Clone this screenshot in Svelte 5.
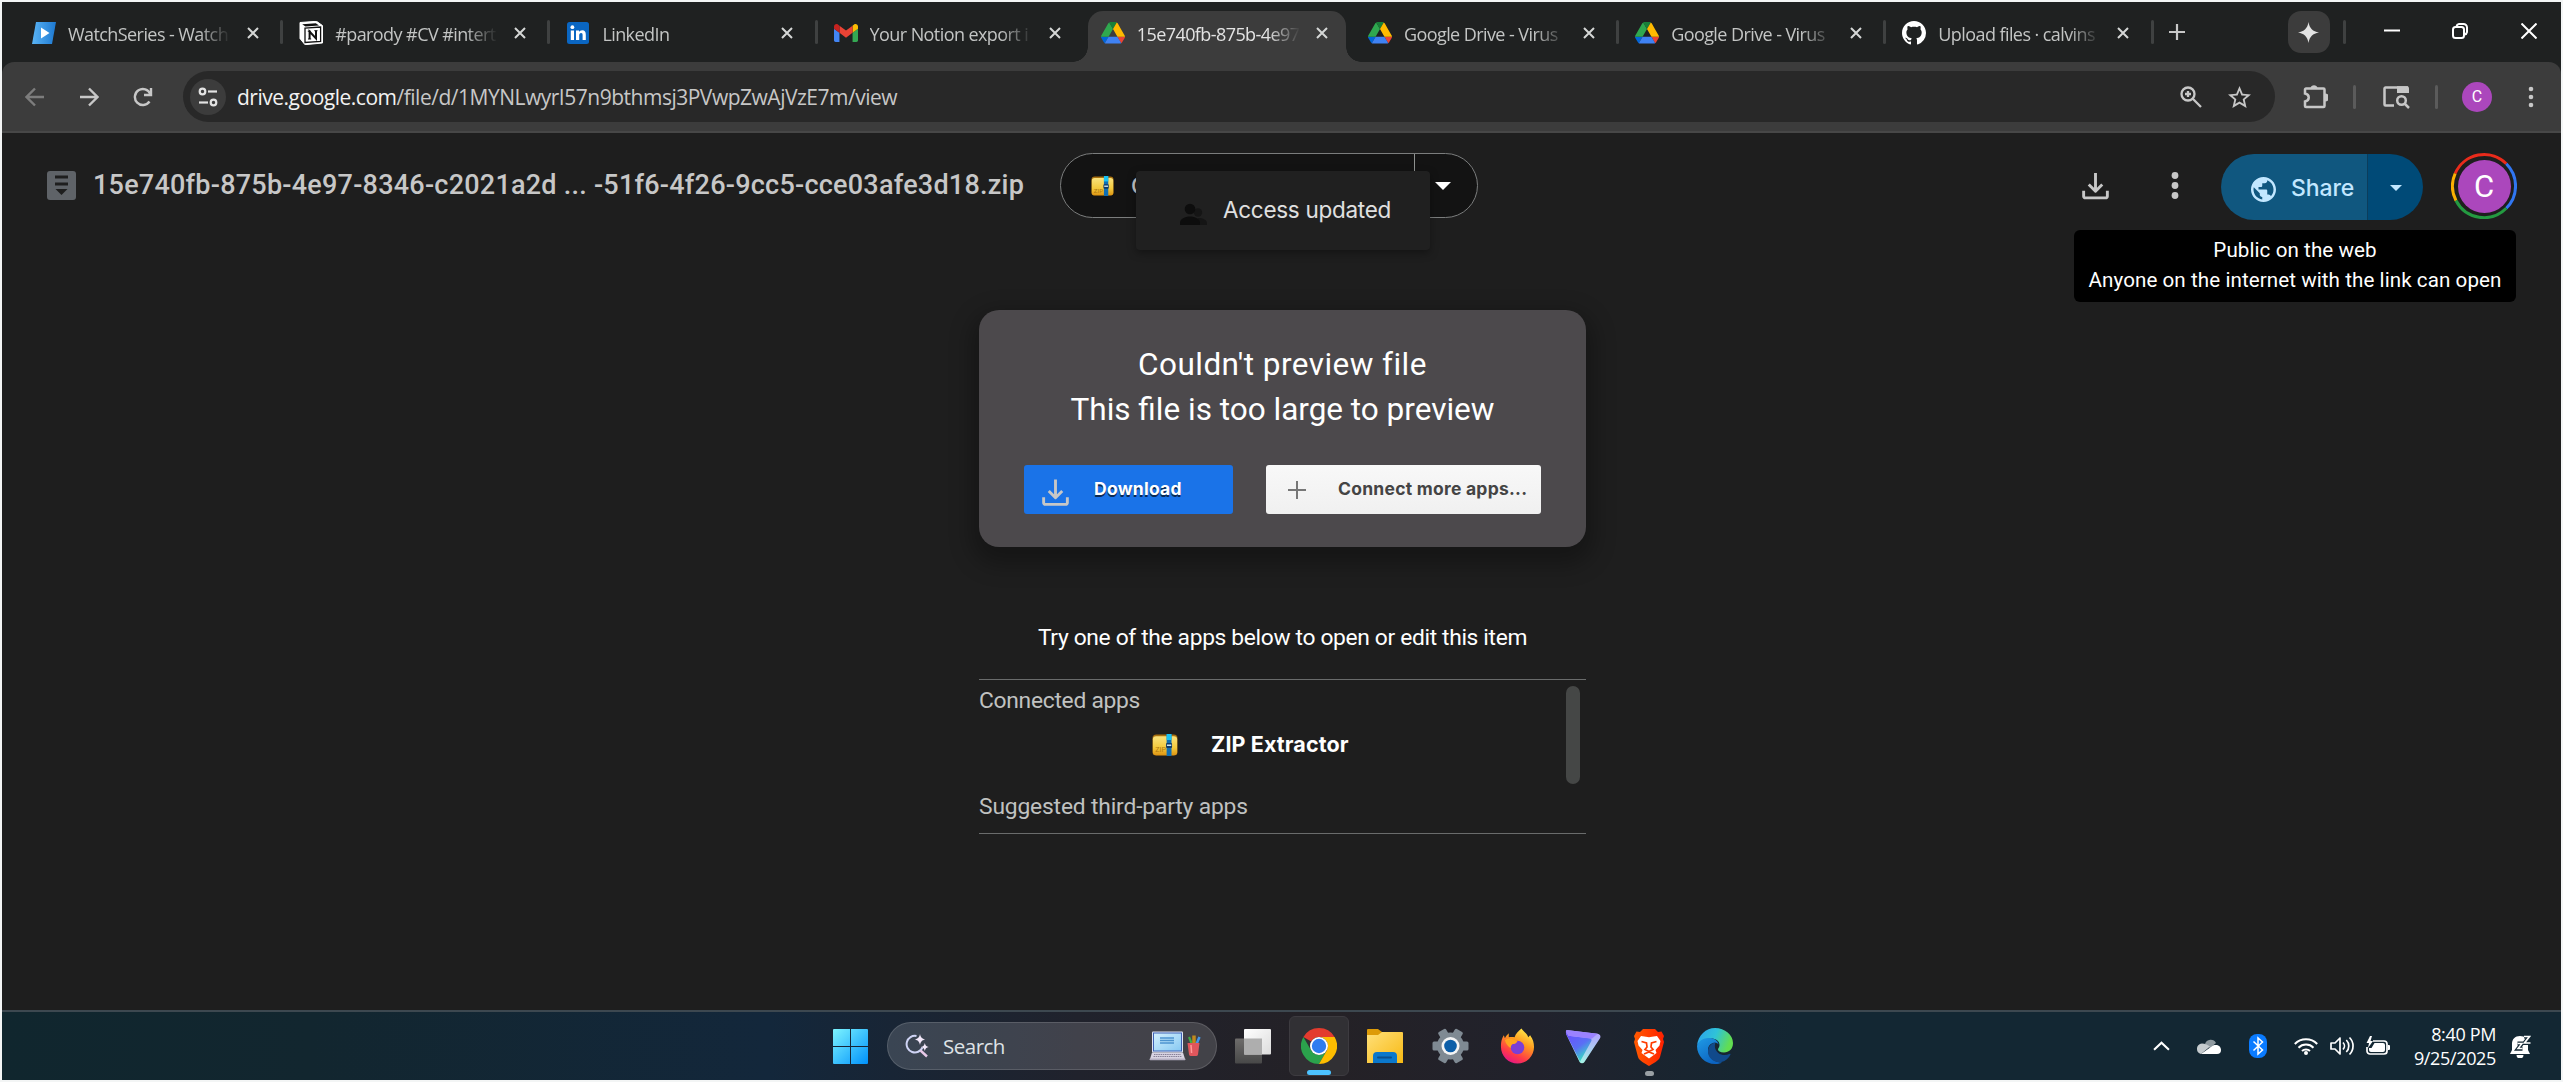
<script>
  const tabs = [
    { icon: 'watch', title: 'WatchSeries - Watch' },
    { icon: 'notion', title: '#parody #CV #intert' },
    { icon: 'linkedin', title: 'LinkedIn' },
    { icon: 'gmail', title: 'Your Notion export i' },
    { icon: 'drive', title: '15e740fb-875b-4e97', active: true },
    { icon: 'drive', title: 'Google Drive - Virus' },
    { icon: 'drive', title: 'Google Drive - Virus' },
    { icon: 'github', title: 'Upload files · calvins' }
  ];
</script>

{#snippet favicon(kind)}
  {#if kind === 'watch'}
    <svg class="fav" viewBox="0 0 24 24">
      <defs><linearGradient id="ws" x1="0" y1="0" x2="1" y2="0"><stop offset="0" stop-color="#5ab4f5" /><stop offset="1" stop-color="#1d78d0" /></linearGradient></defs>
      <path d="M4 1h20l-4 22H0z" fill="url(#ws)" /><path d="M9 6.5v11l8.5-5.5z" fill="#fff" />
    </svg>
  {:else if kind === 'notion'}
    <svg class="fav" viewBox="0 0 24 24">
      <path d="M1 1.5 17.5.3 23.5 4.6V22L6 23.7 1 17.5z" fill="#fff" stroke="#fff" stroke-linejoin="round" />
      <path d="M3.2 3.2 16.8 2.2l3.2 2.2L6.5 5.4z" fill="#111" /><path d="M6 7.1 21.6 6v14.4L6 21.5z" fill="#fff" stroke="#111" stroke-width="1.3" />
      <path d="M10.6 18v-7.500l6.400 7v-7.800" fill="none" stroke="#111" stroke-width="2" />
      <path d="M8.800 10.200h3M15.300 9.700h3.200M9 18h3.200" stroke="#111" stroke-width="1" />
    </svg>
  {:else if kind === 'linkedin'}
    <svg class="fav" viewBox="0 0 24 24">
      <rect x="1" y="1" width="22" height="22" rx="2.5" fill="#0a66c2" /><circle cx="6.4" cy="6.2" r="1.9" fill="#fff" />
      <path d="M4.800 9.600h3.200V19H4.800zM10 9.600h3V11c.6-1 1.700-1.700 3.200-1.700 2.700 0 3.600 1.700 3.600 4.400V19h-3.200v-4.800c0-1.300-.3-2.200-1.500-2.200-1.300 0-1.900 1-1.900 2.300V19H10z" fill="#fff" />
    </svg>
  {:else if kind === 'gmail'}
    <svg class="fav" viewBox="52 31 88 88">
      <path d="M58 108h14V74L52 59v43c0 3.320 2.690 6 6 6" fill="#4285f4" /><path d="M120 108h14c3.320 0 6-2.690 6-6V59l-20 15" fill="#34a853" />
      <path d="M120 48v26l20-15v-8c0-7.420-8.470-11.650-14.400-7.200" fill="#fbbc04" /><path d="M72 74V48l24 18 24-18v26L96 92" fill="#ea4335" />
      <path d="M52 51v8l20 15V48l-5.600-4.200c-5.940-4.450-14.400-.22-14.400 7.200" fill="#c5221f" />
    </svg>
  {:else if kind === 'drive'}
    <svg class="fav" viewBox="0 -4 87.300 87.300">
      <path d="m6.600 66.850 3.850 6.650c.8 1.400 1.950 2.500 3.300 3.300l13.750-23.800h-27.500c0 1.550.4 3.100 1.200 4.500z" fill="#0066da" />
      <path d="m43.650 25-13.750-23.800c-1.350.8-2.500 1.900-3.300 3.300l-25.400 44a9.060 9.060 0 0 0 -1.200 4.500h27.500z" fill="#2fa84f" />
      <path d="m73.550 76.800c1.350-.8 2.500-1.900 3.300-3.300l1.600-2.750 7.650-13.250c.8-1.400 1.200-2.950 1.200-4.500h-27.502l5.852 11.500z" fill="#ea4335" />
      <path d="m43.650 25 13.750-23.800c-1.350-.8-2.900-1.200-4.500-1.200h-18.500c-1.600 0-3.150.45-4.500 1.200z" fill="#188038" />
      <path d="m59.800 53h-32.300l-13.750 23.800c1.350.8 2.900 1.200 4.500 1.200h50.800c1.600 0 3.150-.45 4.500-1.200z" fill="#3f82f3" />
      <path d="m73.400 26.500-12.700-22c-.8-1.400-1.950-2.500-3.300-3.300l-13.750 23.800 16.150 28h27.450c0-1.550-.4-3.100-1.200-4.500z" fill="#ffba00" />
    </svg>
  {:else}
    <svg class="fav" viewBox="0 0 16 16">
      <path fill="#fff" d="M8 0C3.580 0 0 3.580 0 8c0 3.540 2.290 6.530 5.470 7.590.4.070.55-.17.55-.38 0-.19-.01-.82-.01-1.490-2.010.37-2.530-.49-2.690-.94-.09-.23-.48-.94-.82-1.130-.28-.15-.68-.52-.01-.53.63-.01 1.080.58 1.230.82.72 1.210 1.870.87 2.330.66.070-.52.28-.87.51-1.070-1.780-.2-3.640-.89-3.640-3.950 0-.87.31-1.590.82-2.150-.08-.2-.36-1.020.08-2.120 0 0 .67-.21 2.200.82.64-.18 1.320-.27 2-.27.68 0 1.360.09 2 .27 1.530-1.040 2.200-.82 2.200-.82.44 1.100.16 1.920.08 2.120.51.56.82 1.270.82 2.150 0 3.070-1.870 3.750-3.650 3.950.29.25.54.73.54 1.480 0 1.070-.01 1.930-.01 2.200 0 .21.15.46.55.38A8.013 8.013 0 0016 8c0-4.420-3.580-8-8-8z" />
    </svg>
  {/if}
{/snippet}

{#snippet zip(cls)}
  <svg class={cls} viewBox="0 0 24 22" preserveAspectRatio="none">
    <defs><linearGradient id="zg" x1="0" y1="0" x2="0" y2="1"><stop offset="0" stop-color="#f9e27c" /><stop offset=".6" stop-color="#f3c93c" /><stop offset="1" stop-color="#dd9412" /></linearGradient></defs>
    <rect x=".5" y=".5" width="23" height="21" rx="3.500" fill="#a8700f" /><rect x=".8" y="2.300" width="22.400" height="19" rx="3" fill="url(#zg)" />
    <rect x="13.500" width="4.500" height="22" fill="#0f6fb5" /><rect x="13.500" width="4.500" height="6" fill="#19c3f3" /><rect x="13" y="9" width="5.500" height="5" rx="1" fill="#123a66" /><rect x="13.800" y="10.500" width="4" height="1.500" fill="#c8e6f5" />
    <text x="3" y="18.500" font-size="6.500" font-family="Roboto, sans-serif" fill="#b07a10">ZIP</text>
  </svg>
{/snippet}

{#snippet tray(cls)}
  <svg class={cls} viewBox="0 0 28 28" fill="none" stroke="currentColor" stroke-width="3" stroke-linecap="butt" stroke-linejoin="round">
    <path d="M14 .5v19M7 12.500l7 7 7-7" /><path d="M1.700 19v5.500a1.800 1.800 0 0 0 1.800 1.800h21a1.800 1.800 0 0 0 1.800-1.800V19" />
  </svg>
{/snippet}

<div class="screen">
  <header class="tabstrip">
    {#each tabs as t, i}
      <div class="tab" class:active={t.active} class:sep={i !== 3 && i !== 4}>
        {@render favicon(t.icon)}
        <span class="tab-title">{t.title}</span>
        <svg class="close" viewBox="0 0 12 12"><path d="M1 1l10 10M11 1L1 11" /></svg>
      </div>
    {/each}
    <svg class="newtab" viewBox="0 0 16 16"><path d="M8 0v16M0 8h16" /></svg>
    <div class="spark"><svg viewBox="0 0 20 20"><path d="M10 0c1 6 4 9 10 10-6 1-9 4-10 10-1-6-4-9-10-10 6-1 9-4 10-10z" fill="#e3e3e3" /></svg></div>
    <i class="vline strip"></i>
    <svg class="win min" viewBox="0 0 16 16"><path d="M0 7.500h16" /></svg>
    <svg class="win rest" viewBox="0 0 16 16"><rect x="1" y="4" width="11" height="11" rx="2.500" /><path d="M4.500 3.500A3 3 0 0 1 7 1h4.500A3.500 3.500 0 0 1 15 4.500V9a3 3 0 0 1-2.500 2.500" /></svg>
    <svg class="win x" viewBox="0 0 16 16"><path d="M.5.5l15 15M15.500.5l-15 15" /></svg>
  </header>

  <div class="toolbar">
    <svg class="nav dim" viewBox="0 0 20 20"><path d="M19 10H2M10 1.500L1.500 10l8.500 8.500" /></svg>
    <svg class="nav" viewBox="0 0 20 20"><path d="M1 10h17M10 1.500l8.500 8.500-8.500 8.500" /></svg>
    <svg class="nav" viewBox="0 0 20 20"><path d="M16.500 14.500A8 8 0 1 1 17.300 7" /><path d="M18 1v7h-7" /></svg>
    <div class="omni">
      <span class="site"><svg viewBox="0 0 20 20"><circle cx="4.500" cy="4.500" r="2.800" /><path d="M10 4.500h9" /><circle cx="15.500" cy="15.500" r="2.800" /><path d="M1 15.500h9" /></svg></span>
      <span class="url"><span class="host">drive.google.com</span>/file/d/1MYNLwyrI57n9bthmsj3PVwpZwAjVzE7m/view</span>
      <svg class="oicon zoomi" viewBox="0 0 22 22"><circle cx="8" cy="8" r="6.500" /><path d="M12.800 12.800L21 21M8 5v6M5 8h6" /></svg>
      <svg class="oicon star" viewBox="2 2 20 19"><path d="M22 9.240l-7.190-.62L12 2 9.190 8.630 2 9.240l5.460 4.730L5.820 21 12 17.270 18.180 21l-1.630-7.030L22 9.240zM12 15.400l-3.760 2.270 1-4.280-3.320-2.880 4.380-.38L12 6.100l1.710 4.040 4.380.38-3.320 2.880 1 4.280L12 15.400z" /></svg>
    </div>
    <svg class="ext" viewBox="0 0 25 25"><path d="M3 4.500h17.500a1 1 0 0 1 1 1V22a1 1 0 0 1-1 1H3a1 1 0 0 1-1-1v-4.500c5-1 5-7 0-8V5.500a1 1 0 0 1 1-1z" fill="none" stroke="#c7c7c7" stroke-width="2.500" /><path d="M7.500 4a3.600 3.600 0 0 1 7 0zM22 9.500a3.700 3.700 0 0 1 0 8z" fill="#c7c7c7" /></svg>
    <i class="vline"></i>
    <svg class="lens" viewBox="0 0 27 24"><path d="M11 20.500H2.500a1 1 0 0 1-1-1v-16a1 1 0 0 1 1-1H25" fill="none" stroke="#c7c7c7" stroke-width="2.500" /><path d="M14 1.200h10a2 2 0 0 1 2 2V8H14z" fill="#c7c7c7" /><circle cx="18.500" cy="15.500" r="4.300" fill="none" stroke="#c7c7c7" stroke-width="2.500" /><path d="M21.500 18.500l4.500 4.500" stroke="#c7c7c7" stroke-width="2.500" /></svg>
    <i class="vline"></i>
    <span class="ava small">C</span>
    <svg class="dots sm" viewBox="0 0 6 22"><circle cx="3" cy="3" r="2.300" /><circle cx="3" cy="11" r="2.300" /><circle cx="3" cy="19" r="2.300" /></svg>
  </div>

  <main>
    <div class="head">
      <svg class="archive" viewBox="0 0 29 29"><rect width="29" height="29" rx="3" fill="#5f6368" /><path d="M8 6h13M8 13h13" stroke="#1e1e1e" stroke-width="3" /><path d="M8.500 18h12L14.500 24z" fill="#1e1e1e" /></svg>
      <h1>15e740fb-875b-4e97-8346-c2021a2d ... -51f6-4f26-9cc5-cce03afe3d18.zip</h1>
      <div class="openwith">
        {@render zip('zip-s')}
        <span class="ow-label">Open with</span>
        <span class="ow-drop"><svg viewBox="0 0 16 8"><path d="M0 0h16L8 8z" fill="#fff" /></svg></span>
        <div class="toast">
          <svg viewBox="0 0 27 22"><circle cx="18" cy="9.500" r="4.200" fill="#151515" /><path d="M14 22h13v-2c0-3-4-5-9-5z" fill="#151515" /><circle cx="10" cy="6" r="5.300" fill="#0d0d0d" /><path d="M0 22v-2.500C0 16 5 13.500 10 13.500s10 2.500 10 6V22z" fill="#0d0d0d" /></svg>
          <span>Access updated</span>
        </div>
      </div>
      {@render tray('dl-top')}
      <svg class="dots lg" viewBox="0 0 8 27"><circle cx="4" cy="3.500" r="3.400" /><circle cx="4" cy="13.500" r="3.400" /><circle cx="4" cy="23.500" r="3.400" /></svg>
      <div class="share">
        <span class="share-main">
          <svg viewBox="2 2 20 20"><path fill="#c2e7ff" d="M12 2C6.480 2 2 6.480 2 12s4.480 10 10 10 10-4.480 10-10S17.520 2 12 2zm-1 17.930c-3.950-.49-7-3.850-7-7.930 0-.62.08-1.210.21-1.790L9 15v1c0 1.100.9 2 2 2v1.930zm6.900-2.540c-.26-.81-1-1.390-1.900-1.390h-1v-3c0-.55-.45-1-1-1H8v-2h2c.55 0 1-.45 1-1V7h2c1.100 0 2-.9 2-2v-.41c2.930 1.190 5 4.060 5 7.410 0 2.080-.8 3.970-2.100 5.390z" /></svg>
          <span>Share</span>
        </span>
        <span class="share-drop"><svg viewBox="0 0 12 6"><path d="M0 0h12L6 6z" fill="#c2e7ff" /></svg></span>
      </div>
      <div class="ring">
        <svg viewBox="0 0 66 66" fill="none" stroke-width="3">
          <path d="M4.170 20.500A31.500 31.500 0 0 1 55.300 10.700" stroke="#ea2b1b" /><path d="M55.300 10.700A31.500 31.500 0 0 1 55.300 55.300" stroke="#3076f2" />
          <path d="M55.300 55.300A31.500 31.500 0 0 1 4.950 47.500" stroke="#249a41" /><path d="M4.950 47.500A31.500 31.500 0 0 1 4.170 20.500" stroke="#fbb003" />
        </svg>
        <span class="ava big">C</span>
      </div>
      <div class="tip"><span>Public on the web</span><span>Anyone on the internet with the link can open</span></div>
    </div>

    <section class="card">
      <p class="h first">Couldn't preview file</p>
      <p class="h">This file is too large to preview</p>
      <div class="btns">
        <button class="b-dl">{@render tray('dl-btn')}<span>Download</span></button>
        <button class="b-more"><svg viewBox="0 0 18 18"><path d="M9 0v18M0 9h18" stroke="#777" stroke-width="2" /></svg><span>Connect more apps...</span></button>
      </div>
    </section>

    <p class="try">Try one of the apps below to open or edit this item</p>
    <section class="apps">
      <div class="col">
        <p class="lab con">Connected apps</p>
        <div class="zrow">{@render zip('zip-m')}<b>ZIP Extractor</b></div>
        <p class="lab sug">Suggested third-party apps</p>
      </div>
      <i class="thumb"></i>
    </section>
  </main>

  <footer>
    <svg class="start" viewBox="0 0 35 35"><defs><linearGradient id="wg" x1="0" y1="0" x2="1" y2="1"><stop offset="0" stop-color="#7df5ff" /><stop offset="1" stop-color="#0091fb" /></linearGradient></defs><path d="M1 0h16v17H0V1a1 1 0 0 1 1-1zM18 0h16a1 1 0 0 1 1 1v16H18zM0 18h17v17H1a1 1 0 0 1-1-1zM18 18h17v16a1 1 0 0 1-1 1H18z" fill="url(#wg)" /></svg>
    <div class="search">
      <svg class="s-ic" viewBox="0 0 24 24"><path d="M11.500 2A8.300 8.300 0 1 0 17.500 13.500" fill="none" stroke="#cfd4f5" stroke-width="2" /><path d="M15.500 16.500l6.500 6" stroke="#e8c9e8" stroke-width="2.400" /><path d="M15 0c.7 3.500 2 4.800 5.300 5.500C17 6.200 15.700 7.500 15 11c-.7-3.500-2-4.800-5.300-5.500C13 4.800 14.300 3.500 15 0zM19.800 9c.5 2.500 1.400 3.500 3.900 4-2.500.5-3.400 1.500-3.900 4-.5-2.500-1.400-3.500-3.900-4 2.500-.5 3.400-1.500 3.900-4z" fill="#f3e9fb" /></svg>
      <span>Search</span>
      <svg class="s-art" viewBox="0 0 52 30">
        <defs><linearGradient id="lg" x1="0" y1="0" x2="1" y2="1"><stop offset="0" stop-color="#d5f1fd" /><stop offset="1" stop-color="#86c8f2" /></linearGradient></defs>
        <rect x="3" y=".5" width="31" height="21" rx="1" fill="#dfe6f5" /><rect x="4.500" y="2" width="28" height="18" fill="url(#lg)" stroke="#3f62b5" /><path d="M11 7h14M11 9.500h14M11 12h14" stroke="#4d94cf" stroke-width="1.300" />
        <path d="M3 21.500h31l2 6.500H1z" fill="#d8d3e2" /><path d="M5 23.500h27M4.500 25.500h28" stroke="#857f96" stroke-dasharray="1.500 .7" /><rect x=".5" y="27.500" width="36" height="1.800" rx=".8" fill="#b5afc2" />
        <path d="M40 6l2.500 6" stroke="#3fae49" stroke-width="2.200" /><path d="M45 4.500V12" stroke="#c08a1c" stroke-width="3.500" /><path d="M50.500 6L47.500 13" stroke="#4596e6" stroke-width="2.500" /><path d="M38.500 12h12l-1.500 11.500a2 2 0 0 1-2 1.500h-5a2 2 0 0 1-2-1.500z" fill="#e0565c" /><path d="M42 14l.6 8" stroke="#ff9a98" stroke-width="1.500" />
      </svg>
    </div>
    <svg class="tv" viewBox="0 0 36 35"><defs><linearGradient id="tvw" x1="0" y1="0" x2="1" y2="1"><stop offset="0" stop-color="#fff" /><stop offset="1" stop-color="#dcdcdc" /></linearGradient><linearGradient id="tvg" x1="0" y1="0" x2="0" y2="1"><stop offset="0" stop-color="#6e6c6b" /><stop offset="1" stop-color="#484848" /></linearGradient></defs><rect x="0" y="9.500" width="27" height="25" rx="1" fill="url(#tvg)" /><rect x="9" y="0" width="27" height="25.500" rx="1" fill="url(#tvw)" /><rect x="9" y="9.500" width="18" height="16" fill="#aeaeae" /></svg>
    <div class="tile">
      <svg viewBox="0 0 36 36">
        <path d="M18 0A18 18 0 0 1 33.590 9H18a9 9 0 0 0-7.790 4.500L2.410 9A18 18 0 0 1 18 0z" fill="#e33b2e" />
        <path d="M2.410 9A18 18 0 0 0 18 36l7.790-13.500a9 9 0 0 1-15.580 0z" fill="#2ba24c" />
        <path d="M33.590 9A18 18 0 0 1 18 36l7.790-13.500A9 9 0 0 0 18 9z" fill="#fdbd00" />
        <circle cx="18" cy="18" r="9" fill="#fff" /><circle cx="18" cy="18" r="7.200" fill="#2f7cf0" />
      </svg>
      <i></i>
    </div>
    <svg class="folder" viewBox="0 0 36 34"><defs><linearGradient id="fg" x1="0" y1="0" x2="1" y2="1"><stop offset="0" stop-color="#ffe07a" /><stop offset="1" stop-color="#f8b913" /></linearGradient></defs><path d="M0 1a1 1 0 0 1 1-1h10l4 3v4H0z" fill="#dd9b08" /><path d="M0 6h11l4-3h20a1 1 0 0 1 1 1v30H0z" fill="url(#fg)" /><path d="M6 34v-7a4 4 0 0 1 4-4h16a4 4 0 0 1 4 4v7z" fill="#0b78cc" /><rect x="10" y="27.500" width="15" height="2" rx="1" fill="#0a4f8e" /></svg>
    <svg class="gear" viewBox="0 0 36 36"><g fill="#7f8a93"><circle cx="18" cy="18" r="13.500" />{#each [0, 60, 120] as a}<rect x="0" y="13.500" width="36" height="9" rx="1.500" transform="rotate({a} 18 18)" />{/each}</g><circle cx="18" cy="18" r="9" fill="#f4f4f4" /><circle cx="18" cy="18" r="6.300" fill="#0c5ea8" /></svg>
    <svg class="fox" viewBox="0 0 36 36">
      <defs><linearGradient id="ff" x1=".8" y1="0" x2=".3" y2="1"><stop offset="0" stop-color="#fff44f" /><stop offset=".4" stop-color="#ff9a1f" /><stop offset=".75" stop-color="#ff3b47" /><stop offset="1" stop-color="#e31587" /></linearGradient></defs>
      <path d="M22 0c2 3 6 5 7 9l2-2c3 4 4 8 4 12a17 17 0 0 1-34 0C1 13 2 10 4 7l1 3C6 8 8 6 9 5v4c2-.5 4-.4 6 0 1-4 4-6 7-9z" fill="url(#ff)" />
      <circle cx="18" cy="19.500" r="7" fill="#7b3fd6" /><path d="M5 12c3-2 7-2 10 0l3 1c-1 2-3 3-5 3-1 1-2 2-2 4-2-1-5-4-6-8z" fill="#ffa51f" />
    </svg>
    <svg class="proton" viewBox="0 0 36 36"><defs><linearGradient id="pa" x1="0" y1="0" x2=".6" y2="1"><stop offset="0" stop-color="#6d4aff" /><stop offset=".6" stop-color="#5a6ff5" /><stop offset="1" stop-color="#35e3c0" /></linearGradient><linearGradient id="pb" x1=".5" y1="0" x2=".4" y2="1"><stop offset="0" stop-color="#b39dff" /><stop offset="1" stop-color="#a5f5e6" /></linearGradient></defs><path d="M1 1l32 4a3 3 0 0 1 2.500 4.500L19.500 34a3 3 0 0 1-5 0L.5 5z" fill="url(#pb)" /><path d="M.3 3A2 2 0 0 1 2 1.500L3 7l22 2.500a2 2 0 0 1 1.500 3L15 33.500 1 6z" fill="url(#pa)" /><path d="M1 1l32 4-6 5L3 7 .3 3z" fill="#9b82ff" /></svg>
    <div class="brave">
      <svg viewBox="0 0 30 37"><defs><linearGradient id="bg" x1="0" x2="1" y1="0" y2="0"><stop offset="0" stop-color="#ff5a00" /><stop offset="1" stop-color="#ff2000" /></linearGradient></defs><path d="M9 0h12l3 3 3.500-.5L30 7l-1 3 1 3-4 15c-1 4-8 7-11 9-3-2-10-5-11-9L0 13l1-3-1-3 2.500-4.500L6 3z" fill="url(#bg)" /><path d="M7 7l5 .8 3 .4 3-.4L23 7l3.500 5-1 4.500-4 4.500 1 3-7.500 5.500L7.500 24l1-3-4-4.500-1-4.500z" fill="#fff" /><path d="M7.500 12.500l5 1.500.5 4-2 2.500 4 2 4-2-2-2.500.5-4 5-1.500M10 25l5-2 5 2" fill="none" stroke="#ff3c00" stroke-width="1.700" /></svg>
      <i></i>
    </div>
    <svg class="edge" viewBox="0 0 36 36">
      <defs><linearGradient id="ea" x1="0" y1="0" x2="1" y2=".3"><stop offset="0" stop-color="#2c9ff0" /><stop offset=".55" stop-color="#2fc3d8" /><stop offset="1" stop-color="#62dd52" /></linearGradient><linearGradient id="eb" x1="0" y1="0" x2=".6" y2="1"><stop offset="0" stop-color="#1f9be6" /><stop offset="1" stop-color="#0c63c0" /></linearGradient></defs>
      <path d="M0 18C1 7 9 0 18 0c10 0 18 7 18 15 0 6-4 9.500-9 9.500-4 0-6-1.500-6-3 0-1.500 1.500-2 1.500-4.500C22.500 13 19 10.500 14 10.500 7 10.500 1 14 0 18z" fill="url(#ea)" />
      <path d="M0 18c1-4.500 6-8 12-8 5 0 9 2.500 9.500 6.500C20 13.500 11 14 11 22c0 7 6 12.500 14 12.500-2 1-4.500 1.500-7 1.500C8 36 0 28 0 18z" fill="url(#eb)" />
      <path d="M18.500 14.500c-4 .5-7.500 4-7.500 9C11 31 18 35 24.500 34c4-1 7.500-4 9-7.500.3-.8-.5-1-1.200-.6-3 1.600-8 1.500-11-1-3.500-2.800-4-7-2.800-10.400z" fill="#114a8b" />
    </svg>

    <svg class="chev" viewBox="0 0 16 9"><path d="M1 8l7-6.500L15 8" fill="none" stroke="#fff" stroke-width="2" /></svg>
    <svg class="cloud" viewBox="0 0 24 16"><path d="M8 6a6 6 0 0 1 11-1l-6 5z" fill="#8f9aa0" /><path d="M0 11a5 5 0 0 1 5-5.500c3 0 5 1 8 3L4 16a5 5 0 0 1-4-5z" fill="#c5cbce" /><path d="M4 16l12-8.500c4-1.500 8 .5 8 4.500a4 4 0 0 1-4 4z" fill="#fff" /></svg>
    <svg class="bt" viewBox="0 0 18 24"><rect width="18" height="24" rx="8" fill="#0a7bff" /><path d="M4.500 7.500l9 8.500L9 20V4l4.500 4-9 8.500" fill="none" stroke="#fff" stroke-width="1.500" /></svg>
    <svg class="wifi" viewBox="0 0 24 18" fill="none" stroke="#fff" stroke-width="2"><path d="M.8 7a15.500 15.500 0 0 1 22.400 0M4.500 10.700a10.500 10.500 0 0 1 15 0M8 14a5.800 5.800 0 0 1 8 0" /><circle cx="12" cy="16" r="2" fill="#fff" stroke="none" /></svg>
    <svg class="spk" viewBox="0 0 24 20" fill="none" stroke="#fff" stroke-width="1.700"><path d="M1 7h4l5-5v16l-5-5H1z" stroke-linejoin="round" /><path d="M13 6.500a5 5 0 0 1 0 7M16.300 4a8.500 8.500 0 0 1 0 12M19.500 1.500a12 12 0 0 1 0 17" /></svg>
    <svg class="bat" viewBox="0 0 24 20"><path d="M7 5h11a3 3 0 0 1 3 3v7a3 3 0 0 1-3 3H4a3 3 0 0 1-3-3v-4" fill="none" stroke="#fff" stroke-width="1.700" /><path d="M8.500 7H17a2 2 0 0 1 2 2v5a2 2 0 0 1-2 2H5a2 2 0 0 1-2-2v-2h2.500z" fill="#fff" /><path d="M22 9h1a1 1 0 0 1 1 1v3a1 1 0 0 1-1 1h-1zM4 0L.5 7H3l-1 5 5-7H4.500L6 0z" fill="#fff" /></svg>
    <div class="clock"><span>8:40 PM</span><span>9/25/2025</span></div>
    <svg class="bell" viewBox="0 0 21 23"><path d="M10 1c-5 0-8 3-8 8v6l-2 4h20l-2-4V9c0-5-3-8-8-8zM6.500 20h7a3.500 3.500 0 0 1-7 0z" fill="#fff" /><path d="M14 1.500h5.500l-5 6.500h6.500M7.500 8.500H12L8 13.800h4.500" fill="none" stroke="#132733" stroke-width="4" /><path d="M14 1.500h5.500l-5 6.500h6" fill="none" stroke="#fff" stroke-width="1.700" /><path d="M7.500 8.500H12L8 13.500h4.500" fill="none" stroke="#fff" stroke-width="1.500" /></svg>
  </footer>
</div>

<style>
  :global(body) { background: #f3f5f5; }
  .screen { box-sizing: border-box; width: 2563px; height: 1082px; padding: 2px; display: flex; flex-direction: column; overflow: hidden; background-color: #1f2121; background-clip: content-box; }
  svg { display: block; flex: none; }
  p, h1 { margin: 0; }
  .tabstrip, .toolbar, .head, footer { display: flex; align-items: center; flex: none; }

  .tabstrip { height: 60px; box-sizing: border-box; padding: 9px 0 0 13px; align-items: flex-start; font: 18px "Open Sans", "Noto Sans", sans-serif; color: #c3c5c4; }
  .tab { width: 267.2px; height: 51px; box-sizing: border-box; padding: 0 0 8px 17px; display: flex; align-items: center; position: relative; }
  .tab.sep::after { content: ''; position: absolute; right: -1px; top: 9px; width: 3px; height: 24px; border-radius: 2px; background: #3f4141; }
  .tab.active { color: #e3e3e3; }
  .tab.active::before { content: ''; position: absolute; z-index: 0; left: -11px; right: -10px; top: 0; bottom: 0; background:
    radial-gradient(circle at 0 0, transparent 14.500px, #3c3c3c 15px) left 0 bottom 0 / 15px 15px no-repeat,
    radial-gradient(circle at 100% 0, transparent 14.500px, #3c3c3c 15px) right 0 bottom 0 / 15px 15px no-repeat; }
  .tab.active::after { content: ''; position: absolute; left: 4px; right: 5px; top: 0; bottom: 0; border-radius: 15px 15px 0 0; background: #3c3c3c; }
  .tab > * { position: relative; z-index: 1; }
  .fav { width: 24px; height: 24px; }
  .tab-title { width: 163px; margin: 3px 0 0 12px; white-space: nowrap; letter-spacing: -.58px; -webkit-mask-image: linear-gradient(90deg, #000 80%, transparent); mask-image: linear-gradient(90deg, #000 80%, transparent); }
  .close { width: 12px; height: 12px; margin-left: 16px; fill: none; stroke: #d5d7d6; stroke-width: 2; }
  .newtab { width: 16px; height: 16px; margin: 13px 0 0 16px; stroke: #c7c7c7; stroke-width: 2.200; }
  .spark { width: 42px; height: 42px; margin-left: 103px; border-radius: 13px; background: #3c3c3c; display: grid; place-items: center; }
  .spark svg { width: 21px; height: 21px; }
  .vline { width: 3px; height: 24px; border-radius: 2px; background: #5b5b5b; flex: none; }
  .vline.strip { margin: 9px 0 0 13px; background: #3f4141; }
  .win { width: 16px; height: 16px; margin-top: 12px; fill: none; stroke: #fff; stroke-width: 2; }
  .min { margin-left: 38px; } .rest { margin-left: 52px; } .x { margin-left: 53px; }

  .toolbar { height: 71px; box-sizing: border-box; padding-left: 23px; border-bottom: 2px solid #474747; border-radius: 12px 12px 0 0; background: #3c3c3c; }
  .nav { width: 20px; height: 20px; fill: none; stroke: #c7c7c7; stroke-width: 2.400; margin-right: 34px; }
  .dim { stroke: #7d7d7d; }
  .omni { width: 2092px; height: 51px; margin-left: -4px; border-radius: 26px; background: #282828; display: flex; align-items: center; flex: none; }
  .site { width: 36px; height: 36px; margin: 0 11px 0 7px; border-radius: 50%; background: #3c3c3c; display: grid; place-items: center; }
  .site svg { width: 20px; height: 20px; fill: none; stroke: #e3e3e3; stroke-width: 2.200; }
  .url { flex: 1; font: 21px/30px "Open Sans", "Noto Sans", sans-serif; letter-spacing: -.49px; color: #c7c7c7; white-space: nowrap; }
  .host { color: #f2f2f2; }
  .oicon { width: 22px; height: 22px; fill: none; stroke: #c7c7c7; stroke-width: 2.300; }
  .star { width: 23px; fill: #c7c7c7; stroke: none; margin: 0 24px 0 26px; }
  .ext { width: 25px; height: 25px; margin: 0 25px 0 28px; }
  .lens { width: 27px; height: 24px; margin: 0 25px 0 27px; }
  .ava { border-radius: 50%; background: #ab47bc; color: #fff; display: grid; place-items: center; font-family: Roboto, sans-serif; flex: none; }
  .small { width: 30px; height: 30px; font-size: 16px; margin: 0 36px 0 24px; }
  .dots { fill: #c7c7c7; }
  .sm { width: 6px; height: 22px; }

  main { flex: 1; background: #1e1e1e; display: flex; flex-direction: column; align-items: center; font-family: Inter, Roboto, sans-serif; color: #fff; }
  .head { width: 100%; height: 105px; position: relative; }
  .archive { width: 29px; height: 29px; margin: 0 17px 0 45px; }
  h1 { width: 948px; margin-top: -1px; font: 500 27px/36px Roboto, sans-serif; letter-spacing: .235px; color: #c7c7c7; white-space: nowrap; }
  .openwith { width: 418px; height: 65px; margin-left: 19px; box-sizing: border-box; border: 1.500px solid #7b7d7d; border-radius: 33px; background: #131313; display: flex; align-items: center; position: relative; flex: none; }
  .zip-s { width: 23px; height: 20px; margin: 0 17px 0 30px; }
  .ow-label { width: 283px; font-size: 23px; font-weight: 500; white-space: nowrap; color: #c7c7c7; }
  .ow-drop { align-self: stretch; flex: 1; border-left: 1px solid #8e918f; display: flex; align-items: center; padding-left: 20px; }
  .ow-drop svg { width: 16px; height: 8px; }
  .toast { position: absolute; left: 75px; top: 17px; width: 294px; height: 79px; box-sizing: border-box; padding: 0 0 0 44px; border-radius: 4px; background: #202020; box-shadow: 0 3px 8px rgba(0,0,0,.35); display: flex; align-items: center; color: #e0e0e0; font-size: 22.500px; letter-spacing: -.28px; }
  .toast svg { width: 27px; height: 22px; margin: 7px 16px 0 0; }
  .toast span { margin-top: -3px; }
  .dl-top { width: 27px; height: 28px; color: #c7c7c7; margin-left: 604px; }
  .lg { width: 8px; height: 27px; margin-left: 62px; }
  .share { margin: 3px 0 0 42px; width: 202px; height: 66px; display: flex; border-radius: 33px; overflow: hidden; flex: none; font-size: 23px; font-weight: 500; color: #c2e7ff; }
  .share-main { width: 147px; box-sizing: border-box; background: #10577f; border-right: 1px solid #0b3d5b; display: flex; align-items: center; padding-left: 30px; }
  .share-main svg { width: 25px; height: 25px; margin: 4px 15px 0 0; }
  .share-main span { margin-top: 1px; letter-spacing: -.1px; }
  .share-drop { flex: 1; background: #004a77; display: flex; align-items: center; padding-left: 22px; }
  .share-drop svg { width: 12px; height: 6px; margin-top: 2px; }
  .ring { width: 66px; height: 66px; margin: 1px 0 0 28px; display: grid; place-items: center; }
  .ring > * { grid-area: 1 / 1; }
  .ring svg { width: 66px; height: 66px; }
  .big { width: 53px; height: 53px; font-size: 31px; }
  .tip { position: absolute; left: 2072px; top: 97px; width: 442px; height: 72px; box-sizing: border-box; padding-top: 5px; border-radius: 6px; background: #000; display: flex; flex-direction: column; align-items: center; font: 20.600px/30px Roboto, sans-serif; letter-spacing: .07px; white-space: nowrap; }

  .card { width: 607px; height: 237px; box-sizing: border-box; margin: 72px 0 0 2px; padding: 32px 45px 0; border-radius: 20px; background: #4c494c; box-shadow: 0 10px 22px 8px rgba(0,0,0,.28); display: flex; flex-direction: column; align-items: center; }
  .h { font: 31.500px/45px Roboto, sans-serif; white-space: nowrap; }
  .first { letter-spacing: .45px; }
  .btns { display: flex; gap: 33px; margin-top: 33px; width: 517px; }
  button { height: 49px; border: 0; padding: 0 0 2px; border-radius: 3px; display: flex; align-items: center; font: 700 17.500px Inter, Roboto, sans-serif; letter-spacing: .25px; white-space: nowrap; }
  .b-dl { width: 209px; background: #1a73e8; color: #fff; text-shadow: 0 1.500px 0 #0a2a55; }
  .dl-btn { width: 27px; height: 27px; margin: 8px 25px 0 18px; color: #c7c7c7; }
  .b-more { width: 275px; background: linear-gradient(#f8f8f8, #f0f0f0); color: #444; }
  .b-more svg { width: 18px; height: 18px; margin: 2px 32px 0 22px; }
  .try { margin: 76px 0 0 2px; font: 22.800px/30px Roboto, sans-serif; letter-spacing: -.34px; white-space: nowrap; }
  .apps { width: 607px; height: 155px; box-sizing: border-box; margin: 26px 0 0 2px; border: solid #6a6c6c; border-width: 1px 0; display: flex; }
  .col { width: 587px; }
  .lab { margin-top: 7px; font: 22.800px/28px Roboto, sans-serif; letter-spacing: -.16px; color: #c0c2c1; white-space: nowrap; }
  .con { letter-spacing: -.27px; }
  .zrow { display: flex; align-items: center; height: 30px; margin: 15px 0 0 173px; font-size: 21.500px; letter-spacing: .1px; }
  .zrow b { margin-top: -2px; }
  .zip-m { width: 26px; height: 22px; margin-right: 33px; }
  .sug { margin-top: 33px; }
  .thumb { width: 14px; height: 98px; margin-top: 6px; border-radius: 7px; background: #454746; }

  footer { height: 70px; box-sizing: border-box; border-top: 2px solid #3d4850; background: linear-gradient(90deg, #10262e 0, #12262f 12%, #13273b 30%, #20222c 42%, #242126 52%, #21222c 60%, #132733 70%, #132733 100%); color: #fff; font-family: "Open Sans", "Noto Sans", sans-serif; }
  .start { width: 35px; height: 35px; margin-left: 831px; }
  .search { width: 330px; height: 48px; box-sizing: border-box; margin-left: 19px; border: 1px solid rgba(255,255,255,.14); border-radius: 24px; background: rgba(255,255,255,.15); display: flex; align-items: center; font-size: 20.500px; letter-spacing: -.5px; color: #dfe2e6; flex: none; }
  .s-ic { width: 24px; height: 24px; margin: 0 14px 0 17px; }
  .search span { width: 206px; }
  .s-art { width: 52px; height: 30px; }
  .tv { width: 36px; height: 35px; margin-left: 18px; }
  .tile { width: 60px; height: 60px; box-sizing: border-box; margin-left: 18px; padding-top: 11px; border: 1px solid #3d3b40; border-radius: 6px; background: #313034; display: flex; flex-direction: column; align-items: center; flex: none; }
  .tile svg { width: 36px; height: 36px; }
  .tile i { width: 24px; height: 5px; margin-top: 6px; border-radius: 3px; background: #4cc2ff; }
  .folder { width: 36px; height: 34px; margin-left: 18px; }
  .gear { width: 37px; height: 36px; margin-left: 29px; }
  .fox { width: 35px; height: 36px; margin-left: 31px; }
  .proton { width: 36px; height: 35px; margin-left: 30px; }
  .brave { margin: 13px 0 0 33px; display: flex; flex-direction: column; align-items: center; }
  .brave svg { width: 30px; height: 37px; }
  .brave i { width: 9px; height: 5px; margin-top: 5px; border-radius: 3px; background: #9aa0a4; }
  .edge { width: 36px; height: 36px; margin-left: 33px; }
  .chev { width: 17px; height: 10px; margin-left: 420px; }
  .cloud { width: 24px; height: 16px; margin-left: 27px; }
  .bt { width: 18px; height: 24px; margin-left: 28px; }
  .wifi { width: 24px; height: 18px; margin-left: 27px; }
  .spk { width: 24px; height: 20px; margin-left: 12px; }
  .bat { width: 24px; height: 20px; margin-left: 12px; }
  .clock { width: 106px; display: flex; flex-direction: column; align-items: flex-end; font-size: 18px; line-height: 24px; letter-spacing: -.35px; }
  .bell { width: 21px; height: 23px; margin-left: 14px; }
</style>
